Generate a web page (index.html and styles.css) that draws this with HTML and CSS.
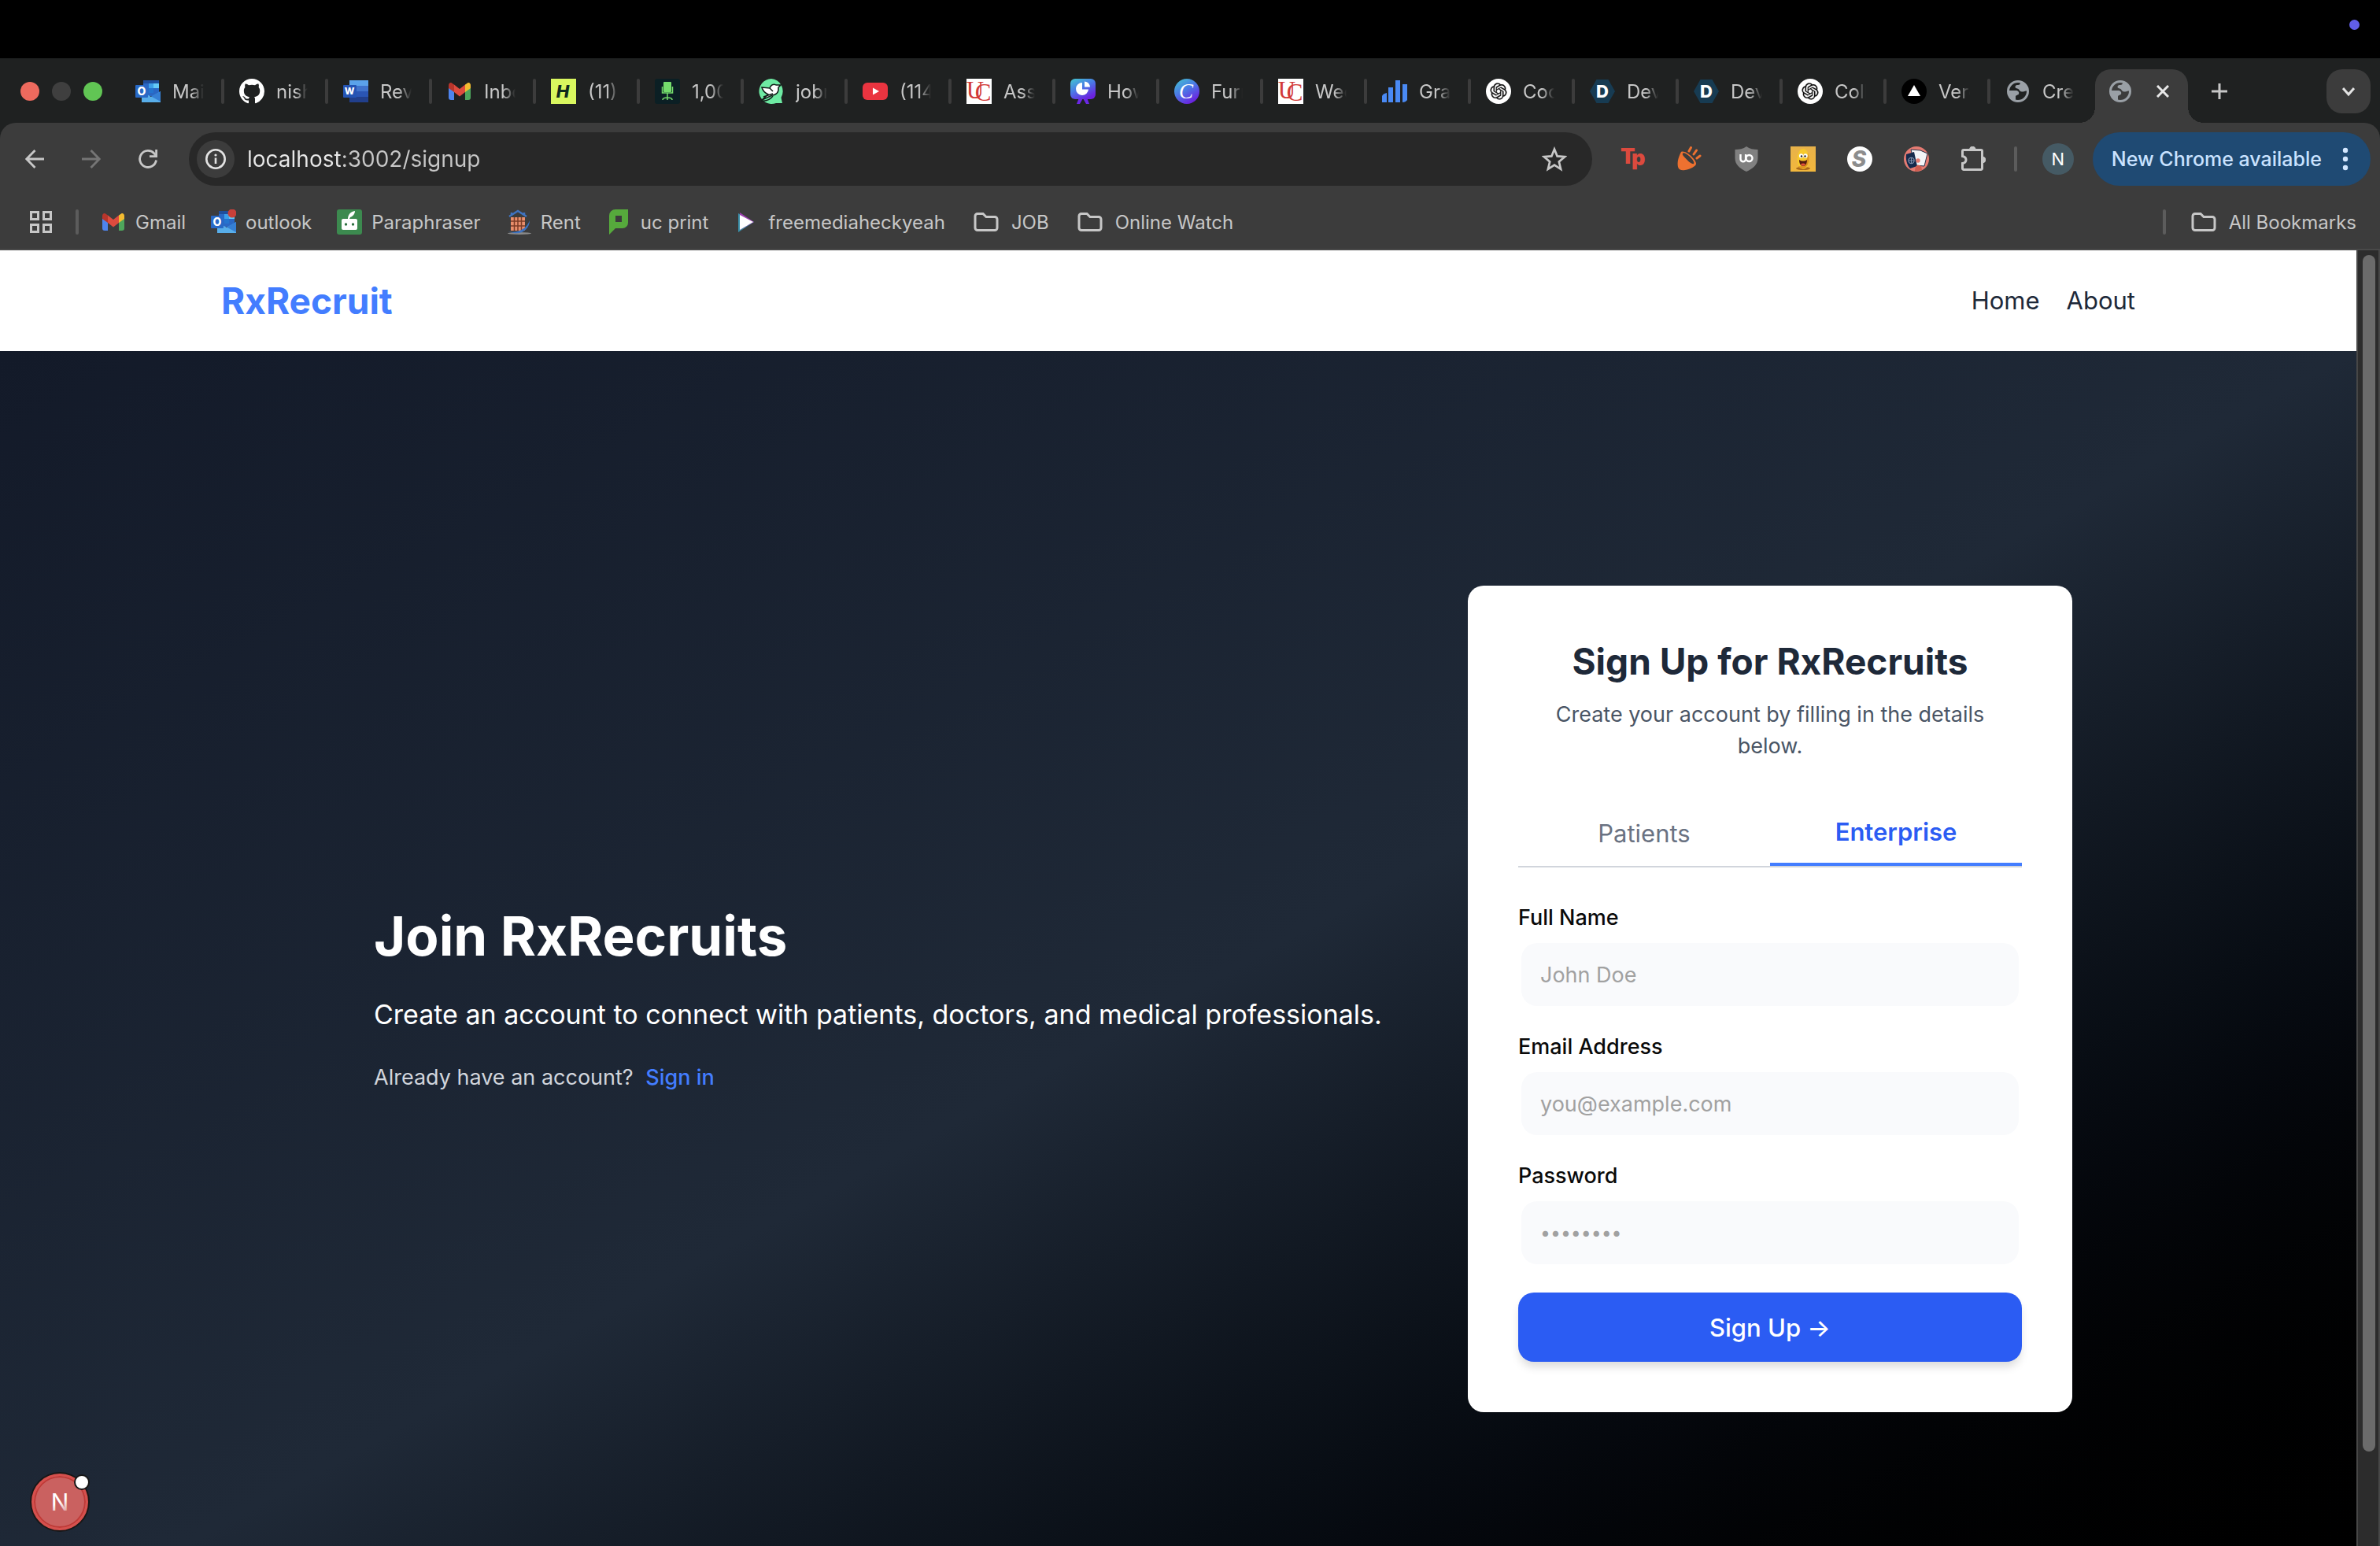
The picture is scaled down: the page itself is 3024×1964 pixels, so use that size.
FILE: index.html
```html
<!DOCTYPE html>
<html lang="en">
<head>
    <meta charset="UTF-8">
    <meta name="viewport" content="width=device-width, initial-scale=1.0">
    <title>RxRecruit - Sign Up</title>
    <link rel="stylesheet" href="styles.css">
</head>
<body>
    <!-- gradients -->
    <svg class="defs" aria-hidden="true">
        <defs>
            <linearGradient id="canvaFill" x1="0" y1="0" x2="0.6" y2="1">
                <stop offset="0" stop-color="#43c8cf"/>
                <stop offset="0.5" stop-color="#4a7be6"/>
                <stop offset="1" stop-color="#6b22e0"/>
            </linearGradient>
            <linearGradient id="eggBack" x1="0" y1="0" x2="0" y2="1">
                <stop offset="0" stop-color="#e8b24a"/>
                <stop offset="1" stop-color="#f2b73c"/>
            </linearGradient>
            <linearGradient id="nextFill" x1="0" y1="0" x2="0.3" y2="1">
                <stop offset="0.6" stop-color="#fff"/>
                <stop offset="1" stop-color="#fff" stop-opacity="0.4"/>
            </linearGradient>
        </defs>
    </svg>
    <!-- shared icons -->
    <svg class="sprite" aria-hidden="true">
        <symbol id="outlook" viewBox="0 0 32 32">
            <rect x="10" y="2" width="20" height="20" rx="1" fill="#2a67c4"/>
            <rect x="10" y="2" width="20" height="4" fill="#1f4e9c"/>
            <rect x="17" y="6" width="6" height="6" fill="#3d9fe8"/>
            <rect x="23" y="6" width="7" height="6" fill="#63c9f7"/>
            <rect x="17" y="12" width="6" height="6" fill="#2474cf"/>
            <path d="M8 30V16l12 7 12-7v14z" fill="#58aeea"/>
            <path d="M32 16v13L20 22.500z" fill="#357fd4"/>
            <rect x="0" y="8" width="16" height="16" rx="1" fill="#2869c6"/>
            <text x="8" y="21" text-anchor="middle" font-size="14" font-weight="800" fill="#fff">O</text>
        </symbol>
        <symbol id="word" viewBox="0 0 32 32">
            <path d="M8 2h24v7H8z" fill="#5ba2ea"/>
            <path d="M8 9h24v7H8z" fill="#4073cc"/>
            <path d="M8 16h24v7H8z" fill="#2a55b4"/>
            <path d="M8 23h24v7H8z" fill="#213f8c"/>
            <rect x="0" y="8" width="17" height="16" rx="1" fill="#2454b4"/>
            <text x="8" y="20" text-anchor="middle" font-size="12" font-weight="800" fill="#fff">W</text>
        </symbol>
        <symbol id="github" viewBox="0 0 16 16">
            <path fill="#fff" d="M8 0C3.58 0 0 3.58 0 8c0 3.54 2.29 6.53 5.47 7.59.4.07.55-.17.55-.38 0-.19-.01-.82-.01-1.490-2.010.37-2.530-.49-2.690-.94-.09-.23-.48-.94-.82-1.130-.28-.15-.68-.52-.01-.53.63-.01 1.080.58 1.230.82.72 1.210 1.870.87 2.330.66.07-.52.28-.87.51-1.070-1.780-.2-3.640-.89-3.640-3.950 0-.87.31-1.590.82-2.150-.08-.2-.36-1.020.08-2.120 0 0 .67-.21 2.200.82.64-.18 1.320-.27 2-.27s1.360.09 2 .27c1.530-1.040 2.200-.82 2.200-.82.44 1.100.16 1.920.08 2.120.51.56.82 1.270.82 2.150 0 3.070-1.870 3.750-3.650 3.950.29.25.54.73.54 1.480 0 1.070-.01 1.930-.01 2.200 0 .21.15.46.55.38A8.010 8.010 0 0 0 16 8c0-4.420-3.580-8-8-8z"/>
        </symbol>
        <symbol id="gmail" viewBox="0 0 32 32">
            <path d="M2 9v15a3 3 0 0 0 3 3h4V14z" fill="#4e84ee"/>
            <path d="M30 9v15a3 3 0 0 1-3 3h-4V14z" fill="#4ea65c"/>
            <path d="M23 7.500L26 5.500c2-1.200 4 .5 4 3V12l-7 5z" fill="#f3bb30"/>
            <path d="M9 7.500L6 5.500c-2-1.200-4 .5-4 3V12l7 5z" fill="#b8352b"/>
            <path d="M9 7.500l7 5.500 7-5.500V17l-7 5.500L9 17z" fill="#de4b3e"/>
        </symbol>
        <symbol id="uc" viewBox="0 0 32 32">
            <rect width="32" height="32" fill="#fff"/>
            <text x="11" y="25" text-anchor="middle" class="serif" font-size="31" fill="#d23a38">U</text>
            <text x="21" y="28" text-anchor="middle" class="serif" font-size="31" fill="#d23a38">C</text>
        </symbol>
        <symbol id="openai" viewBox="0 0 32 32">
            <circle cx="16" cy="16" r="16" fill="#fff"/>
            <g transform="translate(5.500 5.500) scale(.875)" fill="#111" stroke="#111" stroke-width=".3">
                <path d="M22.2819 9.8211a5.9847 5.9847 0 0 0-.5157-4.9108 6.0462 6.0462 0 0 0-6.5098-2.9A6.0651 6.0651 0 0 0 4.9807 4.1818a5.9847 5.9847 0 0 0-3.9977 2.9 6.0462 6.0462 0 0 0 .7427 7.0966 5.98 5.98 0 0 0 .511 4.9107 6.051 6.051 0 0 0 6.5146 2.9001A5.9847 5.9847 0 0 0 13.2599 24a6.0557 6.0557 0 0 0 5.7718-4.2058 5.9894 5.9894 0 0 0 3.9977-2.9001 6.0557 6.0557 0 0 0-.7475-7.0729zm-9.022 12.6081a4.4755 4.4755 0 0 1-2.8764-1.0408l.1419-.0804 4.7783-2.7582a.7948.7948 0 0 0 .3927-.6813v-6.7369l2.02 1.1686a.071.071 0 0 1 .038.052v5.5826a4.504 4.504 0 0 1-4.4945 4.4944zm-9.6607-4.1254a4.4708 4.4708 0 0 1-.5346-3.0137l.142.0852 4.783 2.7582a.7712.7712 0 0 0 .7806 0l5.8428-3.3685v2.3324a.0804.0804 0 0 1-.0332.0615L9.74 19.9502a4.4992 4.4992 0 0 1-6.1408-1.6464zM2.3408 7.8956a4.485 4.485 0 0 1 2.3655-1.9728V11.6a.7664.7664 0 0 0 .3879.6765l5.8144 3.3543-2.0201 1.1685a.0757.0757 0 0 1-.071 0l-4.8303-2.7865A4.504 4.504 0 0 1 2.3408 7.872zm16.5963 3.8558L13.1038 8.364 15.1192 7.2a.0757.0757 0 0 1 .071 0l4.8303 2.7913a4.4944 4.4944 0 0 1-.6765 8.1042v-5.6772a.79.79 0 0 0-.407-.667zm2.0107-3.0231l-.142-.0852-4.7735-2.7818a.7759.7759 0 0 0-.7854 0L9.409 9.2297V6.8974a.0662.0662 0 0 1 .0284-.0615l4.8303-2.7866a4.4992 4.4992 0 0 1 6.6802 4.66zM8.3065 12.863l-2.02-1.1638a.0804.0804 0 0 1-.038-.0567V6.0742a4.4992 4.4992 0 0 1 7.3757-3.4537l-.142.0805L8.704 5.459a.7948.7948 0 0 0-.3927.6813zm1.0976-2.3654l2.602-1.4998 2.6069 1.4998v2.9994l-2.5974 1.4997-2.6067-1.4997Z"/>
            </g>
        </symbol>
        <symbol id="devpost" viewBox="0 0 32 32">
            <path d="M8.500 1h15L32 16l-8.500 15h-15L0 16z" fill="#173b52"/>
            <text x="16" y="24" text-anchor="middle" font-size="22" font-weight="800" fill="#fff">D</text>
        </symbol>
        <symbol id="globe" viewBox="-2 -2 32 32">
            <circle cx="14" cy="14" r="12.500" fill="none" stroke="#9aa0a6" stroke-width="3"/>
            <path fill="#9aa0a6" d="M2 13h9c3 0 5 2 4 4.500-.6 1.500-4 1-4 3.500v5C5 24 2 19 2 13z"/>
            <path fill="#9aa0a6" d="M17 2c0 3-1 4-3 4s-3.500.5-3.500 2.500 3.500 1.500 4.500 3 2 3.500 5 3 3-1 6-1C26 8 22 3 17 2z"/>
        </symbol>
        <symbol id="folder" viewBox="0 0 40 32">
            <path d="M6 8.500A3 3 0 0 1 9 5.500h7l4 4h11a3 3 0 0 1 3 3V23.500a3 3 0 0 1-3 3H9a3 3 0 0 1-3-3z" fill="none" stroke="#c7c7c7" stroke-width="3"/>
        </symbol>
    </svg>

    <div class="menubar"><span class="mic-dot"></span></div>

    <nav class="tabstrip" aria-label="Tabs">
        <div class="lights">
            <span class="light light-close"></span>
            <span class="light light-min"></span>
            <span class="light light-max"></span>
        </div>
        <button class="tab"><svg class="icon"><use href="#outlook"/></svg><span class="tab-label">Mai</span></button>
        <button class="tab"><svg class="icon"><use href="#github"/></svg><span class="tab-label">nish</span></button>
        <button class="tab"><svg class="icon"><use href="#word"/></svg><span class="tab-label">Rev</span></button>
        <button class="tab"><svg class="icon"><use href="#gmail"/></svg><span class="tab-label">Inbo</span></button>
        <button class="tab">
            <svg class="icon" viewBox="0 0 32 32"><rect width="32" height="32" fill="#d9f75f"/><text x="15" y="24" text-anchor="middle" font-size="22" font-weight="800" font-style="italic" fill="#10291c">H</text></svg>
            <span class="tab-label">(11)</span>
        </button>
        <button class="tab">
            <svg class="icon" viewBox="0 0 32 32"><rect width="32" height="32" rx="3" fill="#0b1f24"/><rect x="11" y="4" width="10" height="13" rx="1" fill="#74dc6c"/><path d="M9.500 10v8h13v-8" fill="none" stroke="#74dc6c" stroke-width="1.500"/><path d="M16 18v9M10 27c0-4 12-4 12 0" fill="none" stroke="#74dc6c" stroke-width="1.500"/></svg>
            <span class="tab-label">1,00</span>
        </button>
        <button class="tab">
            <svg class="icon" viewBox="0 0 32 32"><path d="M16 0a16 16 0 1 0 6 31h8l-1.500-7A16 16 0 0 0 16 0z" fill="#6eeaa3"/><path d="M4 11l10 1c1-4 5-6 8-4l6 0-3 3c1 6-3 10-8 10L4 27l8-7c-4-2-7-5-8-9z" fill="#fff" stroke="#111c18" stroke-width="1.500"/><path d="M6 23l12-4M3 28c8 1 12-2 15-6M14 12l4 4" fill="none" stroke="#111c18" stroke-width="1.500"/></svg>
            <span class="tab-label">jobr</span>
        </button>
        <button class="tab">
            <svg class="icon" viewBox="0 0 32 32"><rect y="5" width="32" height="22" rx="6" fill="#ea3440"/><path d="M13 11.500v9l8-4.500z" fill="#fff"/></svg>
            <span class="tab-label">(114</span>
        </button>
        <button class="tab"><svg class="icon"><use href="#uc"/></svg><span class="tab-label">Ass</span></button>
        <button class="tab">
            <svg class="icon" viewBox="0 0 32 32"><path d="M11 24L8 32h4l4-7 4 7h4l-3-8z" fill="#6b27e6"/><rect width="32" height="26" rx="6" fill="url(#canvaFill)"/><path d="M15 5v8.500h8A8 8 0 1 1 15 5z" fill="#fff"/><path d="M18 3.500a8 8 0 0 1 7 7h-7z" fill="#fff"/></svg>
            <span class="tab-label">How</span>
        </button>
        <button class="tab">
            <svg class="icon" viewBox="0 0 32 32"><circle cx="16" cy="16" r="16" fill="url(#canvaFill)"/><text x="15" y="25" text-anchor="middle" class="serif" font-style="italic" font-size="27" fill="#fff">C</text></svg>
            <span class="tab-label">Furn</span>
        </button>
        <button class="tab"><svg class="icon"><use href="#uc"/></svg><span class="tab-label">Wee</span></button>
        <button class="tab">
            <svg class="icon" viewBox="0 0 32 32"><path d="M0 30v-8q1-3 6-4v12zM8 11h6v19H8zM17 2h6v28h-6zM26 7h6v20q-2 3-6 3z" fill="#4a8af4"/></svg>
            <span class="tab-label">Gra</span>
        </button>
        <button class="tab"><svg class="icon"><use href="#openai"/></svg><span class="tab-label">Coc</span></button>
        <button class="tab"><svg class="icon"><use href="#devpost"/></svg><span class="tab-label">Dev</span></button>
        <button class="tab"><svg class="icon"><use href="#devpost"/></svg><span class="tab-label">Dev</span></button>
        <button class="tab"><svg class="icon"><use href="#openai"/></svg><span class="tab-label">Coll</span></button>
        <button class="tab">
            <svg class="icon" viewBox="0 0 32 32"><circle cx="16" cy="16" r="16" fill="#000"/><path d="M16 8l8 14H8z" fill="#fff"/></svg>
            <span class="tab-label">Verc</span>
        </button>
        <button class="tab tab-last"><svg class="icon"><use href="#globe"/></svg><span class="tab-label">Cre</span></button>
        <div class="tab-active">
            <svg class="icon"><use href="#globe"/></svg>
            <button class="tab-x" aria-label="Close tab"><svg class="icon-sm" viewBox="0 0 16 16"><path d="M1 1l14 14M15 1L1 15" stroke="#e8e8e8" stroke-width="3"/></svg></button>
        </div>
        <button class="tool tab-new" aria-label="New tab"><svg class="icon-md" viewBox="0 0 24 24"><path d="M12 2v20M2 12h20" stroke="#c7c7c7" stroke-width="3"/></svg></button>
        <button class="tab-search" aria-label="Search tabs"><svg class="icon-sm" viewBox="0 0 16 16"><path d="M1 4l7 8 7-8" fill="none" stroke="#e3e3e3" stroke-width="3"/></svg></button>
    </nav>

    <div class="chrome">
        <div class="toolbar">
            <button class="tool" aria-label="Back"><svg class="icon-md" viewBox="0 0 24 24"><path d="M24 12H2M12.500 1L1.800 12l10.700 11" fill="none" stroke="#c7c7c7" stroke-width="2.800"/></svg></button>
            <button class="tool" aria-label="Forward"><svg class="icon-md" viewBox="0 0 24 24"><path d="M0 12h22M11.500 1l10.700 11-10.700 11" fill="none" stroke="#757575" stroke-width="2.800"/></svg></button>
            <button class="tool" aria-label="Reload"><svg class="icon-md" viewBox="0 0 24 24"><path d="M22.500 13.500a10.500 10.500 0 1 1-2.500-8.500l2 3" fill="none" stroke="#c7c7c7" stroke-width="2.800"/><path d="M24 0v10H14V7.200h7.200V0z" fill="#c7c7c7"/></svg></button>
            <form class="omnibox">
                <button type="button" class="site-info" aria-label="Site information"><svg class="icon-info" viewBox="0 0 26 26"><circle cx="13" cy="13" r="11.700" fill="none" stroke="#e3e3e3" stroke-width="2.600"/><path d="M13 11.500V19" stroke="#e3e3e3" stroke-width="2.600"/><circle cx="13" cy="8" r="1.600" fill="#e3e3e3"/></svg></button>
                <input class="url" type="text" aria-label="Address" value="localhost:3002/signup">
                <button type="button" class="tool" aria-label="Bookmark this page"><svg class="icon" viewBox="0 0 32 32"><path d="M16 3.500l3.600 8.900 9.400.8-7.200 6.200 2.300 9.400L16 23.700l-8.100 5.100 2.300-9.400L3 13.200l9.400-.8z" fill="none" stroke="#c7c7c7" stroke-width="2.700"/></svg></button>
            </form>
            <div class="extensions">
                <button class="tool" aria-label="Toptal"><svg class="icon" viewBox="0 0 32 32"><g font-weight="900" fill="#dc4a3e"><text x="0" y="22" font-size="27">T</text><text x="14" y="24" font-size="27">p</text></g></svg></button>
                <button class="tool" aria-label="Lamp"><svg class="icon" viewBox="0 0 32 32"><path d="M5 7C1 15 0 20 1 26c1 4 5 5 9 4 7-1 14-5 14-8C25 18 11 4 5 7z" fill="#ee7130"/><path d="M7 9c1-2 6 1 10 5s5 7 4 8-6-2-9-5.500S6 11 7 9z" fill="#3c3c3c"/><path d="M15 6l2.500-4.500M21 10l3.500-5M25 15l4-3" stroke="#ee7130" stroke-width="3" stroke-linecap="round"/></svg></button>
                <button class="tool" aria-label="uBlock"><svg class="icon" viewBox="0 0 32 32"><path d="M16 0c4 3 9 4 14.500 4v11c0 8-6 13-14.500 17C7.500 28 1.500 23 1.500 15V4C7 4 12 3 16 0z" fill="#808080"/><path d="M8.500 10v6a3.300 3.300 0 0 0 6.600 0v-6" fill="none" stroke="#fff" stroke-width="2.400"/><circle cx="19.500" cy="15" r="4" fill="none" stroke="#fff" stroke-width="2.400"/></svg></button>
                <button class="tool" aria-label="Smiley"><svg class="icon" viewBox="0 0 32 32"><rect width="32" height="32" fill="url(#eggBack)"/><ellipse cx="16" cy="28" rx="9" ry="2" fill="#a9681c"/><ellipse cx="16" cy="16" rx="7.500" ry="13" fill="#f7c92c"/><path d="M22 8c3 8 1 16-4 20-3 1-6 1-8-3 6 2 12-5 12-17z" fill="#dd9420"/><circle cx="13.500" cy="12" r="2.700" fill="#fff"/><circle cx="19" cy="12" r="2.700" fill="#fff"/><circle cx="14" cy="12.500" r="1.200" fill="#222"/><circle cx="18.500" cy="12.500" r="1.200" fill="#222"/><path d="M11 17c3 2 7 2 10 0 0 5-2 8-5 8s-5-3-5-8z" fill="#541c10"/><path d="M13 22.500c2-1.500 4-1.500 6 0-1 3-5 3-6 0z" fill="#e4533a"/></svg></button>
                <button class="tool" aria-label="Simplify"><svg class="icon" viewBox="0 0 32 32"><circle cx="16" cy="16" r="16" fill="#fff"/><text x="15" y="26" text-anchor="middle" font-size="28" font-weight="800" font-style="italic" fill="#8d8d8d">S</text></svg></button>
                <button class="tool" aria-label="Visa"><svg class="icon" viewBox="0 0 32 32"><circle cx="16" cy="16" r="16" fill="#e57b72"/><path d="M9 4l12 1 9 4-4 16-12-1z" fill="#f2f4f7" stroke="#27324a" stroke-width="1"/><path d="M3 10l10-3 4 18-9 3C5 25 2 19 3 10z" fill="#152a4c"/><circle cx="9.500" cy="18" r="3.600" fill="none" stroke="#8193ad" stroke-width="1.200"/><path d="M6 18h7M9.500 14.500v7" stroke="#8193ad"/><circle cx="18" cy="18" r="2.700" fill="#e57b72"/><path d="M14 32c0-8 3-10 8-7l1 5z" fill="#cf5d50"/></svg></button>
                <button class="tool" aria-label="Extensions"><svg class="icon" viewBox="0 0 32 32"><path d="M4 4.500h22a1.500 1.500 0 0 1 1.500 1.500v22a1.500 1.500 0 0 1-1.500 1.500H4A1.500 1.500 0 0 1 2.500 28v-6.500c6-1 6-8 0-9V6A1.500 1.500 0 0 1 4 4.500z" fill="none" stroke="#c7c7c7" stroke-width="3"/><path d="M11 4a4.300 4.300 0 0 1 8.600 0zM28 12.700a4.300 4.300 0 0 1 0 8.600z" fill="#c7c7c7"/></svg></button>
            </div>
            <span class="divider"></span>
            <button class="avatar" aria-label="Profile">N</button>
            <button class="update">New Chrome available<svg class="icon-dots" viewBox="0 0 8 32"><circle cx="4" cy="5" r="3.200" fill="#d3e7ff"/><circle cx="4" cy="16" r="3.200" fill="#d3e7ff"/><circle cx="4" cy="27" r="3.200" fill="#d3e7ff"/></svg></button>
        </div>

        <nav class="bookmarks" aria-label="Bookmarks">
            <button class="apps" aria-label="Apps"><svg class="icon-apps" viewBox="0 0 28 28"><path d="M1.500 1.500h9v9h-9zM17.500 1.500h9v9h-9zM1.500 17.500h9v9h-9zM17.500 17.500h9v9h-9z" fill="none" stroke="#c7c7c7" stroke-width="3"/></svg></button>
            <span class="divider"></span>
            <a class="bookmark" href="#"><svg class="icon"><use href="#gmail"/></svg>Gmail</a>
            <a class="bookmark" href="#"><svg class="icon" viewBox="0 0 32 32"><use href="#outlook"/><circle cx="27" cy="5" r="5.500" fill="#c8403a"/></svg>outlook</a>
            <a class="bookmark" href="#"><svg class="icon" viewBox="0 0 32 32"><rect width="32" height="32" rx="3" fill="#3c8a4f"/><rect x="6" y="12" width="20" height="14" rx="2" fill="#fff"/><path d="M14 12c0-5 3-9 9-10 0 4-3 7-6 8l-1 2z" fill="#fff"/><circle cx="11.500" cy="19" r="1.700" fill="#2c7040"/><circle cx="20.500" cy="19" r="1.700" fill="#2c7040"/></svg>Paraphraser</a>
            <a class="bookmark" href="#"><svg class="icon" viewBox="0 0 32 32"><ellipse cx="17" cy="30.500" rx="15" ry="1.500" fill="#8a8a8a"/><rect x="6" y="10" width="18" height="17" fill="#e98f6c"/><path d="M6 15h18M6 21h18M10.500 10v17M15 10v17M19.500 10v17" stroke="#7c3c26" stroke-width="1.500"/><path d="M4 9L15 2l11 7M7 8V4M23 8V4" fill="none" stroke="#3f73c0" stroke-width="2.500"/><path d="M2 28c12 3 24-3 28-14 0 9-8 18-20 16z" fill="#3f73c0"/></svg>Rent</a>
            <a class="bookmark" href="#"><svg class="icon" viewBox="0 0 32 32"><path d="M4 8a8 8 0 0 1 8-8h16v17a7 7 0 0 1-7 7h-9l-8 8zM12 8v8h8V8z" fill="#56aa3c" fill-rule="evenodd"/></svg>uc print</a>
            <a class="bookmark" href="#"><svg class="icon" viewBox="0 0 32 32"><path d="M6 5l20 11L6 29z" fill="#3a8fa8"/><path d="M8 4l18 12L8 26z" fill="#9a3fae"/><path d="M8 7l17 9L8 26z" fill="#fff"/></svg>freemediaheckyeah</a>
            <a class="bookmark" href="#"><svg class="icon-folder"><use href="#folder"/></svg>JOB</a>
            <a class="bookmark" href="#"><svg class="icon-folder"><use href="#folder"/></svg>Online Watch</a>
            <span class="divider all-divider"></span>
            <a class="bookmark" href="#"><svg class="icon-folder"><use href="#folder"/></svg>All Bookmarks</a>
        </nav>
    </div>

    <div class="window">
        <div class="page">
            <header class="site-header">
                <div class="container">
                    <a class="logo" href="#">RxRecruit</a>
                    <nav class="links">
                        <a href="#">Home</a>
                        <a href="#">About</a>
                    </nav>
                </div>
            </header>

            <main class="hero">
                <div class="hero-inner">
                    <section class="intro">
                        <h1>Join RxRecruits</h1>
                        <p class="lead">Create an account to connect with patients, doctors, and medical professionals.</p>
                        <p class="signin">Already have an account? <a href="#">Sign in</a></p>
                    </section>

                    <section class="card">
                        <h2>Sign Up for RxRecruits</h2>
                        <p class="card-text">Create your account by filling in the details below.</p>
                        <div class="roles" role="tablist">
                            <button class="role" role="tab" aria-selected="false">Patients</button>
                            <button class="role role-active" role="tab" aria-selected="true">Enterprise</button>
                        </div>
                        <form class="signup">
                            <div class="field">
                                <label for="name">Full Name</label>
                                <input type="text" id="name" placeholder="John Doe">
                            </div>
                            <div class="field">
                                <label for="email">Email Address</label>
                                <input type="email" id="email" placeholder="you@example.com">
                            </div>
                            <div class="field">
                                <label for="password">Password</label>
                                <input type="password" id="password" class="password" placeholder="••••••••">
                            </div>
                            <button type="submit" class="submit">Sign Up →</button>
                        </form>
                    </section>
                </div>
            </main>
        </div>

        <div class="scrollbar"><div class="thumb"></div></div>

        <button class="dev-badge" aria-label="Next.js dev tools">
            <svg class="icon" viewBox="0 0 32 32"><text x="16" y="27" text-anchor="middle" font-size="30" fill="url(#nextFill)">N</text></svg>
            <span class="dev-dot"></span>
        </button>
    </div>
</body>
</html>
```
FILE: styles.css
```css
* {
    box-sizing: border-box;
}
body {
    margin: 0;
    height: 100vh;
    display: flex;
    flex-direction: column;
    overflow: hidden;
    background: #1f2121;
    color: #c7c7c7;
    font-family: Inter, "Liberation Sans", sans-serif;
    font-size: 24px;
}
button {
    margin: 0;
    padding: 0;
    border: 0;
    background: none;
    color: inherit;
    font: inherit;
}
a {
    color: inherit;
    text-decoration: none;
}
h1, h2, p {
    margin: 0;
}
svg {
    display: block;
    flex: none;
}
.defs {
    position: absolute;
    width: 0;
    height: 0;
}
.sprite {
    display: none;
}
.serif {
    font-family: "Liberation Serif", serif;
}
.icon {
    width: 32px;
    height: 32px;
}
.icon-folder {
    width: 40px;
    height: 32px;
}
.icon-apps {
    width: 28px;
    height: 28px;
}
.icon-info {
    width: 26px;
    height: 26px;
}
.icon-md {
    width: 24px;
    height: 24px;
}
.icon-sm {
    width: 16px;
    height: 16px;
}
.icon-dots {
    width: 8px;
    height: 32px;
}

/* system menu bar */
.menubar {
    flex: none;
    height: 74px;
    padding: 0 26px;
    background: #000;
    display: flex;
    justify-content: flex-end;
}
.mic-dot {
    width: 13px;
    height: 13px;
    margin-top: 25px;
    border-radius: 50%;
    background: #615ee8;
}

/* tabs */
.tabstrip {
    flex: none;
    display: flex;
    align-items: center;
    height: 82px;
    padding: 14px 12px 12px 26px;
}
.lights {
    display: flex;
    gap: 16px;
    margin-right: 24px;
}
.light {
    width: 24px;
    height: 24px;
    border-radius: 50%;
}
.light-close {
    background: #ed6a5e;
}
.light-min {
    background: #3f3f3f;
}
.light-max {
    background: #61c554;
}
.tab {
    flex: 0 0 132px;
    display: flex;
    align-items: center;
    height: 56px;
    padding: 0 1px 0 18px;
}
.tab::after {
    content: "";
    width: 4px;
    height: 32px;
    margin-left: auto;
    border-radius: 2px;
    background: #3c3c3c;
}
.tab-last::after {
    display: none;
}
.tab-label {
    width: 40px;
    margin-left: 15px;
    overflow: hidden;
    white-space: nowrap;
    text-align: left;
    mask-image: linear-gradient(to right, #000 60%, transparent);
}
.tab-active {
    position: relative;
    flex: 0 0 118px;
    display: flex;
    align-items: center;
    justify-content: space-between;
    height: 68px;
    margin-bottom: -12px;
    padding: 0 24px 12px 16px;
    border-radius: 20px 20px 0 0;
    background: #3c3c3c;
}
.tab-active::before,
.tab-active::after {
    content: "";
    position: absolute;
    bottom: 0;
    width: 20px;
    height: 20px;
}
.tab-active::before {
    right: 100%;
    background: radial-gradient(circle at 0 0, transparent 20px, #3c3c3c 20px);
}
.tab-active::after {
    left: 100%;
    background: radial-gradient(circle at 100% 0, transparent 20px, #3c3c3c 20px);
}
.tool {
    flex: none;
    display: flex;
    align-items: center;
    justify-content: center;
    width: 56px;
    height: 56px;
}
.tab-new {
    margin-left: 12px;
}
.tab-search {
    display: flex;
    align-items: center;
    justify-content: center;
    width: 56px;
    height: 56px;
    margin-left: auto;
    border-radius: 20px;
    background: #3c3c3c;
}

/* toolbar and bookmarks */
.chrome {
    flex: none;
    border-bottom: 2px solid #494949;
    border-radius: 20px 20px 0 0;
    background: #3c3c3c;
}
.toolbar {
    display: flex;
    align-items: center;
    gap: 16px;
    padding: 12px 12px 12px 16px;
}
.omnibox {
    flex: 1;
    display: flex;
    align-items: center;
    height: 68px;
    margin: 0 8px;
    padding: 0 20px 0 10px;
    border-radius: 34px;
    background: #282828;
}
.site-info {
    display: flex;
    align-items: center;
    justify-content: center;
    width: 48px;
    height: 48px;
    border-radius: 50%;
    background: #3c3c3c;
}
.url {
    flex: 1;
    min-width: 0;
    height: 40px;
    padding: 0;
    margin-left: 16px;
    border: 0;
    outline: 0;
    font: inherit;
    font-size: 28px;
    /* host part is brighter than the path */
    background: linear-gradient(to right, #e8e8e8 120px, #c7c7c7 120px);
    background-clip: text;
    -webkit-text-fill-color: transparent;
}
.extensions {
    display: flex;
    gap: 16px;
}
.divider {
    flex: none;
    width: 4px;
    height: 32px;
    border-radius: 2px;
    background: #5c5c5c;
}
.toolbar .divider {
    margin: 0 16px 0 8px;
}
.avatar {
    width: 40px;
    height: 40px;
    border-radius: 50%;
    background: #455a64;
    color: #fff;
    font-size: 22px;
}
.update {
    display: flex;
    align-items: center;
    justify-content: space-between;
    gap: 26px;
    height: 68px;
    margin-left: 8px;
    padding: 0 28px 0 24px;
    border-radius: 34px;
    background: #1f4a73;
    color: #c9e2ff;
    font-size: 25px;
    font-weight: 500;
}
.bookmarks {
    display: flex;
    align-items: center;
    height: 68px;
    padding: 0 30px 0 38px;
}
.bookmarks .divider {
    margin: 0 12px 0 30px;
}
.bookmarks .all-divider {
    margin: 0 12px 0 auto;
}
.bookmark {
    display: flex;
    align-items: center;
    gap: 12px;
    padding: 0 16px;
    white-space: nowrap;
}
.bookmark:last-child {
    padding-right: 0;
}

/* page */
.window {
    position: relative;
    flex: 1;
    min-height: 0;
    display: flex;
}
.page {
    flex: 1;
    overflow: hidden;
}
.site-header {
    background: #fff;
}
.container {
    display: flex;
    align-items: center;
    justify-content: space-between;
    max-width: 2560px;
    margin: 0 auto;
    padding: 32px 64px;
    line-height: 64px;
}
.logo {
    color: #437dff;
    font-size: 46px;
    font-weight: 700;
}
.links {
    display: flex;
    gap: 34px;
    color: #1e2939;
    font-size: 31px;
}
.hero {
    display: flex;
    align-items: center;
    justify-content: center;
    min-height: 100%;
    background: linear-gradient(to bottom right in oklab, #131a29, #1f2937, #000);
}
.hero-inner {
    flex: 1;
    display: grid;
    grid-template-columns: 1fr 768px;
    align-items: center;
    max-width: 2272px;
}
.intro {
    display: flex;
    flex-direction: column;
    gap: 32px;
    padding-left: 114px;
    color: #fff;
}
.intro h1 {
    font-size: 69px;
    font-weight: 700;
    line-height: 80px;
}
.lead {
    font-size: 34px;
    line-height: 56px;
    white-space: nowrap;
}
.signin {
    color: #d1d5dc;
    font-size: 27px;
    line-height: 40px;
}
.signin a {
    margin-left: 8px;
    color: #437dff;
    font-weight: 500;
}
.card {
    padding: 64px;
    border-radius: 20px;
    background: #fff;
    text-align: center;
}
.card h2 {
    color: #1e2939;
    font-size: 46px;
    font-weight: 700;
    line-height: 64px;
}
.card-text {
    margin-top: 16px;
    padding: 0 32px;
    color: #4a5565;
    font-size: 27px;
    line-height: 40px;
}
.roles {
    display: flex;
    margin: 48px 0;
    border-bottom: 2px solid #d1d5dc;
}
.role {
    flex: 1;
    height: 84px;
    color: #6a7282;
    font-size: 31px;
}
.role-active {
    border-bottom: 4px solid #437dff;
    color: #2b5cf3;
    font-weight: 600;
}
.signup {
    display: flex;
    flex-direction: column;
    gap: 32px;
}
.field {
    display: flex;
    flex-direction: column;
    gap: 12px;
}
.field label {
    color: #0a0a0a;
    font-size: 27px;
    font-weight: 500;
    line-height: 32px;
    text-align: left;
}
.field input {
    height: 88px;
    padding: 0 24px;
    border: 4px solid transparent;
    border-radius: 24px;
    background: #f9fafc;
    background-clip: padding-box;
    font: inherit;
    font-size: 27px;
}
.field .password {
    font-size: 23px;
}
.field input::placeholder {
    color: #a1a1a1;
}
.submit {
    height: 88px;
    border-radius: 20px;
    background: #2b5cf3;
    box-shadow: 0 8px 12px -2px rgba(0,0,0,0.15);
    color: #fff;
    font-size: 31px;
    font-weight: 500;
}

/* scrollbar */
.scrollbar {
    flex: none;
    width: 30px;
    padding: 6px 4px 6px 6px;
    border: solid #474747;
    border-width: 0 2px;
    background: #2c2c2c;
}
.thumb {
    width: 16px;
    height: 93%;
    border-radius: 8px;
    background: #6b6b6b;
}

/* floating dev indicator */
.dev-badge {
    position: absolute;
    left: 40px;
    bottom: 20px;
    display: flex;
    align-items: center;
    justify-content: center;
    width: 72px;
    height: 72px;
    border: 3px solid #d6504d;
    border-radius: 50%;
    background: #ca6160;
    box-shadow: inset 0 0 0 2px #bf3a37, 0 0 0 2px #171717;
}
.dev-dot {
    position: absolute;
    top: -2px;
    right: -5px;
    width: 20px;
    height: 20px;
    border: 2px solid #171717;
    border-radius: 50%;
    background: #fff;
}
```
